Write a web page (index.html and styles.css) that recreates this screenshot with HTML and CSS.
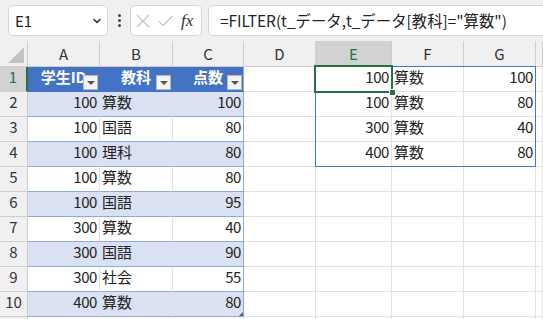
FILE: index.html
```html
<!DOCTYPE html>
<html>
<head>
  <meta charset="utf-8">
  <title>Book1 - FILTER</title>
  <link rel="stylesheet" href="styles.css">
</head>
<body>
  <!-- Formula bar -->
  <div class="toolbar">
    <div class="namebox">
      <span>E1</span>
      <svg width="10" height="10" viewBox="0 0 10 10"><path d="M2 3.5 L5 6.5 L8 3.5" fill="none" stroke="#333" stroke-width="1.6" stroke-linecap="round" stroke-linejoin="round"/></svg>
    </div>
    <div class="dots"><span></span><span></span><span></span></div>
    <div class="fxbox">
      <svg width="16" height="16" viewBox="0 0 16 16"><path d="M2 2 L14 14 M14 2 L2 14" stroke="#c4c4c4" stroke-width="1.2" fill="none"/></svg>
      <svg width="17" height="16" viewBox="0 0 17 16"><path d="M1.5 8 L6 12.5 L15.5 3" stroke="#c4c4c4" stroke-width="1.2" fill="none"/></svg>
      <span class="fx">fx</span>
    </div>
    <div class="formula">=FILTER(t_データ,t_データ[教科]="算数")</div>
  </div>

  <!-- Sheet grid -->
  <div class="sheet">
    <div class="row hdr">
      <div class="cell corner"><svg width="18" height="18" viewBox="0 0 18 18"><path d="M17 1 L17 17 L1 17 Z" fill="#c3c3c3"/></svg></div>
      <div class="cell ch">A</div>
      <div class="cell ch">B</div>
      <div class="cell ch">C</div>
      <div class="cell ch">D</div>
      <div class="cell ch sel">E</div>
      <div class="cell ch">F</div>
      <div class="cell ch">G</div>
      <div class="cell ch"></div>
    </div>

    <div class="row">
      <div class="cell rh sel">1</div>
      <div class="cell th">学生ID<span class="filter"></span></div>
      <div class="cell th">教科<span class="filter"></span></div>
      <div class="cell th last">点数<span class="filter"></span></div>
      <div class="cell"></div>
      <div class="cell num">100</div>
      <div class="cell">算数</div>
      <div class="cell num">100</div>
      <div class="cell"></div>
    </div>

    <div class="row">
      <div class="cell rh">2</div>
      <div class="cell num band">100</div>
      <div class="cell band">算数</div>
      <div class="cell num band last">100</div>
      <div class="cell"></div>
      <div class="cell num">100</div>
      <div class="cell">算数</div>
      <div class="cell num">80</div>
      <div class="cell"></div>
    </div>

    <div class="row">
      <div class="cell rh">3</div>
      <div class="cell num plain">100</div>
      <div class="cell plain">国語</div>
      <div class="cell num plain last">80</div>
      <div class="cell"></div>
      <div class="cell num">300</div>
      <div class="cell">算数</div>
      <div class="cell num">40</div>
      <div class="cell"></div>
    </div>

    <div class="row">
      <div class="cell rh">4</div>
      <div class="cell num band">100</div>
      <div class="cell band">理科</div>
      <div class="cell num band last">80</div>
      <div class="cell"></div>
      <div class="cell num">400</div>
      <div class="cell">算数</div>
      <div class="cell num">80</div>
      <div class="cell"></div>
    </div>

    <div class="row">
      <div class="cell rh">5</div>
      <div class="cell num plain">100</div>
      <div class="cell plain">算数</div>
      <div class="cell num plain last">80</div>
      <div class="cell"></div><div class="cell"></div><div class="cell"></div><div class="cell"></div><div class="cell"></div>
    </div>

    <div class="row">
      <div class="cell rh">6</div>
      <div class="cell num band">100</div>
      <div class="cell band">国語</div>
      <div class="cell num band last">95</div>
      <div class="cell"></div><div class="cell"></div><div class="cell"></div><div class="cell"></div><div class="cell"></div>
    </div>

    <div class="row">
      <div class="cell rh">7</div>
      <div class="cell num plain">300</div>
      <div class="cell plain">算数</div>
      <div class="cell num plain last">40</div>
      <div class="cell"></div><div class="cell"></div><div class="cell"></div><div class="cell"></div><div class="cell"></div>
    </div>

    <div class="row">
      <div class="cell rh">8</div>
      <div class="cell num band">300</div>
      <div class="cell band">国語</div>
      <div class="cell num band last">90</div>
      <div class="cell"></div><div class="cell"></div><div class="cell"></div><div class="cell"></div><div class="cell"></div>
    </div>

    <div class="row">
      <div class="cell rh">9</div>
      <div class="cell num plain">300</div>
      <div class="cell plain">社会</div>
      <div class="cell num plain last">55</div>
      <div class="cell"></div><div class="cell"></div><div class="cell"></div><div class="cell"></div><div class="cell"></div>
    </div>

    <div class="row">
      <div class="cell rh">10</div>
      <div class="cell num band">400</div>
      <div class="cell band">算数</div>
      <div class="cell num band last">80<span class="resize"></span></div>
      <div class="cell"></div><div class="cell"></div><div class="cell"></div><div class="cell"></div><div class="cell"></div>
    </div>

    <div class="row">
      <div class="cell rh"></div>
      <div class="cell"></div><div class="cell"></div><div class="cell"></div><div class="cell"></div><div class="cell"></div><div class="cell"></div><div class="cell"></div><div class="cell"></div>
    </div>

    <!-- spill range + active cell -->
    <div class="spill"></div>
    <div class="active"><span class="handle"></span></div>
  </div>
</body>
</html>
```

FILE: styles.css
```css
body {
  margin: 0;
  width: 543px;
  height: 319px;
  overflow: hidden;
  font-family: "Noto Sans CJK JP", "Noto Sans", sans-serif;
  color: #222;
  background: #fff;
}

/* Formula bar */
.toolbar {
  display: flex;
  align-items: center;
  height: 41px;
  padding-left: 8px;
  box-sizing: border-box;
  background: #f0f0f0;
  overflow: hidden;
}
.namebox {
  display: flex;
  align-items: center;
  justify-content: space-between;
  width: 100px;
  height: 31px;
  padding: 0 5px 0 6px;
  box-sizing: border-box;
  border: 1px solid #d6d6d6;
  border-radius: 5px;
  background: #fff;
  font-size: 15px;
}
.dots { width: 22px; display: flex; flex-direction: column; align-items: center; gap: 2px; }
.dots span { width: 3px; height: 3px; border-radius: 50%; background: #444; }
.fxbox {
  display: flex;
  align-items: center;
  gap: 6px;
  width: 72px;
  height: 31px;
  padding-left: 4px;
  box-sizing: border-box;
  border: 1px solid #d6d6d6;
  border-radius: 5px;
  background: #fff;
}
.fx { font-family: "Liberation Serif", serif; font-style: italic; font-size: 17px; color: #333; margin-left: 1px; }
.formula {
  flex: 1;
  margin-left: 6px;
  margin-right: -20px;
  height: 31px;
  padding-left: 11px;
  box-sizing: border-box;
  border: 1px solid #d6d6d6;
  border-radius: 5px;
  background: #fff;
  font-size: 15.4px;
  line-height: 28px;
  white-space: nowrap;
}

/* Sheet */
.sheet { position: relative; }
.row {
  display: grid;
  grid-template-columns: 28px 72px 73px 71px 72px 76px 72px 72px 1fr;
  height: 25px;
}
.row.hdr { height: 26px; }
.cell {
  position: relative;
  box-sizing: border-box;
  border-right: 1px solid #e1e1e1;
  border-bottom: 1px solid #e1e1e1;
  padding: 0 2px;
  font-size: 15px;
  line-height: 19px;
  white-space: nowrap;
  overflow: hidden;
}
.num { text-align: right; letter-spacing: -0.4px; }

/* headers */
.ch, .rh, .corner {
  background: #f0f0f0;
  border-color: #cdcdcd;
  color: #333;
  text-align: center;
}
.ch { line-height: 25px; }
.corner { display: flex; align-items: flex-end; justify-content: flex-end; padding: 0 2px 2px 0; }
.ch.sel { background: #d2d2d2; color: #217346; border-bottom: 2px solid #217346; }
.rh.sel { background: #d2d2d2; color: #217346; border-right: 2px solid #217346; }

/* table t_データ */
.th {
  background: #4472c4;
  border-color: #4472c4;
  color: #fff;
  font-weight: bold;
  text-align: center;
}
.band { background: #d9e1f2; border-right-color: #d9e1f2; border-bottom-color: #8ea9db; }
.plain { border-bottom-color: #8ea9db; }
.cell.last { border-right-color: #8ea9db; }
.filter {
  position: absolute;
  right: 1px;
  bottom: 1px;
  width: 15px;
  height: 15px;
  box-sizing: border-box;
  border: 1px solid #b8b8b8;
  background: #f4f4f4;
}
.filter:after {
  content: "";
  position: absolute;
  left: 3px;
  top: 5px;
  border-left: 4px solid transparent;
  border-right: 4px solid transparent;
  border-top: 4px solid #555;
}
.resize {
  position: absolute;
  right: 0;
  bottom: 0;
  width: 0;
  height: 0;
  border-left: 4px solid transparent;
  border-bottom: 4px solid #3a5fa0;
}

/* selection overlays */
.spill {
  position: absolute;
  left: 315px;
  top: 25px;
  width: 221px;
  height: 101px;
  box-sizing: border-box;
  border: 1px solid #3c78d8;
}
.active {
  position: absolute;
  left: 314px;
  top: 24px;
  width: 79px;
  height: 28px;
  box-sizing: border-box;
  border: 2px solid #217346;
}
.handle {
  position: absolute;
  right: -5px;
  bottom: -5px;
  width: 7px;
  height: 7px;
  box-sizing: border-box;
  background: #217346;
  border: 1px solid #fff;
}
```
